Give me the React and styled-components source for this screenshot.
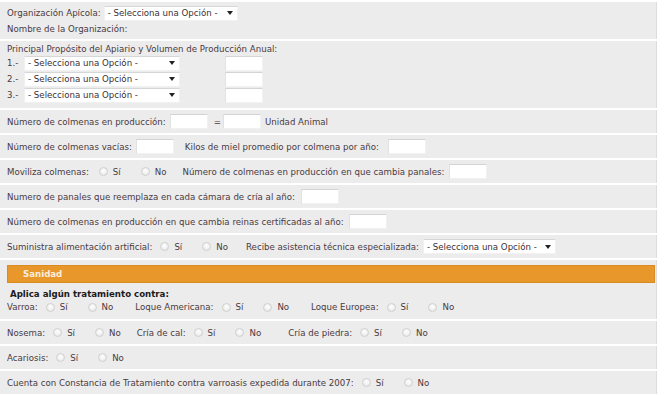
import React from "react";
import styled, { createGlobalStyle } from "styled-components";

const GlobalStyle = createGlobalStyle`
  body {
    margin: 0;
    background: #ffffff;
    font-family: "DejaVu Sans", Verdana, sans-serif;
    font-size: 8.65px;
    color: #4a3a42;
  }
`;

const Page = styled.div`
  width: 657px;
  padding-top: 2px;
`;

const Panel = styled.div`
  background: #ececec;
  border-right: 1px solid #dcdcdc;
  padding: ${(p) => p.pad || "0 7px"};
  margin-bottom: 2px;
  box-sizing: border-box;
`;

const Line = styled.div`
  display: flex;
  align-items: center;
  height: ${(p) => p.h ?? 23}px;
  gap: ${(p) => p.gap ?? 5}px;
  white-space: nowrap;
`;

const Spacer = styled.span`
  flex: 0 0 ${(p) => p.w}px;
`;

const SelectBox = styled.div`
  display: flex;
  align-items: center;
  justify-content: space-between;
  flex: 0 0 ${(p) => p.w}px;
  height: 15px;
  box-sizing: border-box;
  padding: 0 4px 0 3px;
  background: #ffffff;
  border: 1px solid #f1f1f1;
  border-top-color: #d6d6d6;
  color: #3b3136;
`;

const Arrow = styled.span`
  width: 0;
  height: 0;
  border-left: 3px solid transparent;
  border-right: 3px solid transparent;
  border-top: 4px solid #222;
`;

const TextBox = styled.input`
  flex: 0 0 ${(p) => p.w || 38}px;
  width: ${(p) => p.w || 38}px;
  height: 15px;
  box-sizing: border-box;
  margin: 0 ${(p) => p.mr || 0}px 0 ${(p) => p.ml || 0}px;
  padding: 0;
  background: #ffffff;
  border: 1px solid #f1f1f1;
  border-top-color: #d4d4d4;
  border-left-color: #e2e2e2;
  outline: none;
`;

const Radio = styled.span`
  display: inline-block;
  width: 9px;
  height: 9px;
  border-radius: 50%;
  border: 1px solid #d0d0d0;
  background: radial-gradient(circle at 50% 40%, #ffffff 0%, #e6e6e6 90%);
  box-sizing: border-box;
`;

const Option = styled.span`
  display: inline-flex;
  align-items: center;
  gap: 5px;
  margin-right: ${(p) => p.mr ?? 0}px;
`;

const Header = styled.div`
  display: flex;
  align-items: center;
  height: 18px;
  margin: 0 1px 0 7px;
  padding-left: 15px;
  background: #e8972a;
  border: 1px solid #d98a22;
  box-sizing: border-box;
  color: #fbeedd;
  font-weight: bold;
`;

const SanidadBlock = styled.div`
  background: #ececec;
  border-right: 1px solid #dcdcdc;
  padding-top: 5px;
  margin-bottom: 2px;
`;

const Bold = styled.span`
  font-weight: bold;
  color: #1c1a1b;
  padding-left: 3px;
`;

const Label = styled.span`
  margin-right: ${(p) => p.mr ?? 8}px;
  margin-left: ${(p) => p.ml ?? 0}px;
`;

const YesNo = () => (
  <>
    <Option mr={20}>
      <Radio />
      Sí
    </Option>
    <Option>
      <Radio />
      No
    </Option>
  </>
);

const Select = ({ w }) => (
  <SelectBox w={w}>
    <span>- Selecciona una Opción -</span>
    <Arrow />
  </SelectBox>
);

const purposes = ["1.-", "2.-", "3.-"];

export default function App() {
  return (
    <Page>
      <GlobalStyle />
      <Panel pad="3px 7px 2px">
        <Line h={16} gap={3}>
          Organización Apícola: <Select w={134} />
        </Line>
        <Line h={16}>Nombre de la Organización:</Line>
      </Panel>

      <Panel pad="2px 7px 5px">
        <Line h={12}>Principal Propósito del Apiario y Volumen de Producción Anual:</Line>
        {purposes.map((n) => (
          <Line h={16} key={n} gap={0}>
            <Spacer w={17}>{n}</Spacer>
            <Select w={156} />
            <Spacer w={45} />
            <TextBox w={38} />
          </Line>
        ))}
      </Panel>

      <Panel>
        <Line gap={0}>
          <Label mr={4}>Número de colmenas en producción:</Label>
          <TextBox mr={6} />
          <Label mr={2}>=</Label>
          <TextBox mr={4} />
          Unidad Animal
        </Line>
      </Panel>

      <Panel>
        <Line gap={0}>
          <Label mr={4}>Número de colmenas vacías:</Label>
          <TextBox mr={11} />
          <Label mr={9}>Kilos de miel promedio por colmena por año:</Label>
          <TextBox />
        </Line>
      </Panel>

      <Panel>
        <Line gap={0}>
          <Label mr={10}>Moviliza colmenas:</Label>
          <YesNo />
          <Label mr={5} ml={16}>Número de colmenas en producción en que cambia panales:</Label>
          <TextBox />
        </Line>
      </Panel>

      <Panel>
        <Line gap={6}>
          Numero de panales que reemplaza en cada cámara de cría al año: <TextBox />
        </Line>
      </Panel>

      <Panel>
        <Line gap={5}>
          Número de colmenas en producción en que cambia reinas certificadas al año: <TextBox />
        </Line>
      </Panel>

      <Panel>
        <Line gap={0}>
          <Label>Suministra alimentación artificial:</Label>
          <YesNo />
          <Label mr={4} ml={18}>Recibe asistencia técnica especializada:</Label>
          <Select w={133} />
        </Line>
      </Panel>

      <SanidadBlock>
        <Header>Sanidad</Header>
        <Panel pad="4px 7px 5px" style={{ border: 0, margin: 0 }}>
          <Line h={13}>
            <Bold>Aplica algún tratamiento contra:</Bold>
          </Line>
          <Line h={14} gap={0}>
            <Label>Varroa:</Label>
            <YesNo />
            <Label ml={22}>Loque Americana:</Label>
            <YesNo />
            <Label ml={22}>Loque Europea:</Label>
            <YesNo />
          </Line>
        </Panel>
      </SanidadBlock>

      <Panel pad="0 7px">
        <Line gap={0}>
          <Label>Nosema:</Label>
          <YesNo />
          <Label ml={16}>Cría de cal:</Label>
          <YesNo />
          <Label ml={27}>Cría de piedra:</Label>
          <YesNo />
        </Line>
      </Panel>

      <Panel pad="0 7px">
        <Line gap={0}>
          <Label>Acariosis:</Label>
          <YesNo />
        </Line>
      </Panel>

      <Panel pad="0 7px">
        <Line gap={0}>
          <Label>Cuenta con Constancia de Tratamiento contra varroasis expedida durante 2007:</Label>
          <YesNo />
        </Line>
      </Panel>
    </Page>
  );
}
